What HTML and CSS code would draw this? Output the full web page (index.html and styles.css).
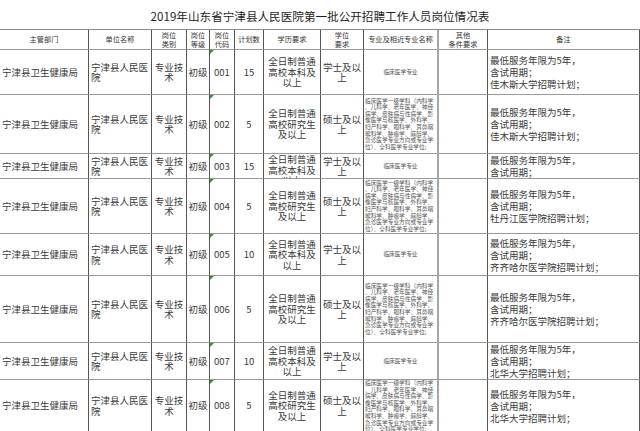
FILE: index.html
```html
<!DOCTYPE html>
<html lang="zh-CN">
<head>
<meta charset="utf-8">
<title>岗位情况表</title>
<link rel="stylesheet" href="styles.css">
</head>
<body>
<div class="title">2019年山东省宁津县人民医院第一批公开招聘工作人员岗位情况表</div>
<div class="sheet">
  <div class="c h">主管部门</div>
  <div class="c h">单位名称</div>
  <div class="c h">岗位
类别</div>
  <div class="c h">岗位
等级</div>
  <div class="c h">岗位
代码</div>
  <div class="c h">计划数</div>
  <div class="c h">学历要求</div>
  <div class="c h">学位
要求</div>
  <div class="c h wide">专业及相近专业名称</div>
  <div class="c h">其他
条件要求</div>
  <div class="c h">备注</div>

  <div class="c l">宁津县卫生健康局</div>
  <div class="c l">宁津县人民医院</div>
  <div class="c">专业技术</div>
  <div class="c">初级</div>
  <div class="c code">001</div>
  <div class="c">15</div>
  <div class="c">全日制普通高校本科及以上</div>
  <div class="c">学士及以上</div>
  <div class="c tiny wide">临床医学专业</div>
  <div class="c"></div>
  <div class="c note">最低服务年限为5年，
含试用期；
佳木斯大学招聘计划；</div>

  <div class="c l">宁津县卫生健康局</div>
  <div class="c l">宁津县人民医院</div>
  <div class="c">专业技术</div>
  <div class="c">初级</div>
  <div class="c code">002</div>
  <div class="c">5</div>
  <div class="c">全日制普通高校研究生及以上</div>
  <div class="c">硕士及以上</div>
  <div class="c tiny long wide">临床医学一级学科（内科学、儿科学、老年医学、神经病学、皮肤病与性病学、影像医学与核医学、外科学、妇产科学、眼科学、耳鼻咽喉科学、肿瘤学、麻醉学、急诊医学专业方向或专业学位）、全科医学专业学位;</div>
  <div class="c"></div>
  <div class="c note">最低服务年限为5年，
含试用期；
佳木斯大学招聘计划；</div>

  <div class="c l">宁津县卫生健康局</div>
  <div class="c l">宁津县人民医院</div>
  <div class="c">专业技术</div>
  <div class="c">初级</div>
  <div class="c code">003</div>
  <div class="c">15</div>
  <div class="c">全日制普通高校本科及以上</div>
  <div class="c">学士及以上</div>
  <div class="c tiny wide">临床医学专业</div>
  <div class="c"></div>
  <div class="c note">最低服务年限为5年，
含试用期；</div>

  <div class="c l">宁津县卫生健康局</div>
  <div class="c l">宁津县人民医院</div>
  <div class="c">专业技术</div>
  <div class="c">初级</div>
  <div class="c code">004</div>
  <div class="c">5</div>
  <div class="c">全日制普通高校研究生及以上</div>
  <div class="c">硕士及以上</div>
  <div class="c tiny long wide">临床医学一级学科（内科学、儿科学、老年医学、神经病学、皮肤病与性病学、影像医学与核医学、外科学、妇产科学、眼科学、耳鼻咽喉科学、肿瘤学、麻醉学、急诊医学专业方向或专业学位）、全科医学专业学位;</div>
  <div class="c"></div>
  <div class="c note">最低服务年限为5年，
含试用期；
牡丹江医学院招聘计划；</div>

  <div class="c l">宁津县卫生健康局</div>
  <div class="c l">宁津县人民医院</div>
  <div class="c">专业技术</div>
  <div class="c">初级</div>
  <div class="c code">005</div>
  <div class="c">10</div>
  <div class="c">全日制普通高校本科及以上</div>
  <div class="c">学士及以上</div>
  <div class="c tiny wide">临床医学专业</div>
  <div class="c"></div>
  <div class="c note">最低服务年限为5年，
含试用期；
齐齐哈尔医学院招聘计划；</div>

  <div class="c l">宁津县卫生健康局</div>
  <div class="c l">宁津县人民医院</div>
  <div class="c">专业技术</div>
  <div class="c">初级</div>
  <div class="c code">006</div>
  <div class="c">5</div>
  <div class="c">全日制普通高校研究生及以上</div>
  <div class="c">硕士及以上</div>
  <div class="c tiny long wide">临床医学一级学科（内科学、儿科学、老年医学、神经病学、皮肤病与性病学、影像医学与核医学、外科学、妇产科学、眼科学、耳鼻咽喉科学、肿瘤学、麻醉学、急诊医学专业方向或专业学位）、全科医学专业学位;</div>
  <div class="c"></div>
  <div class="c note">最低服务年限为5年，
含试用期；
齐齐哈尔医学院招聘计划；</div>

  <div class="c l">宁津县卫生健康局</div>
  <div class="c l">宁津县人民医院</div>
  <div class="c">专业技术</div>
  <div class="c">初级</div>
  <div class="c code">007</div>
  <div class="c">10</div>
  <div class="c">全日制普通高校本科及以上</div>
  <div class="c">学士及以上</div>
  <div class="c tiny wide">临床医学专业</div>
  <div class="c"></div>
  <div class="c note">最低服务年限为5年，
含试用期；
北华大学招聘计划；</div>

  <div class="c l">宁津县卫生健康局</div>
  <div class="c l">宁津县人民医院</div>
  <div class="c">专业技术</div>
  <div class="c">初级</div>
  <div class="c code">008</div>
  <div class="c">5</div>
  <div class="c">全日制普通高校研究生及以上</div>
  <div class="c">硕士及以上</div>
  <div class="c tiny long wide">临床医学一级学科（内科学、儿科学、老年医学、神经病学、皮肤病与性病学、影像医学与核医学、外科学、妇产科学、眼科学、耳鼻咽喉科学、肿瘤学、麻醉学、急诊医学专业方向或专业学位）、全科医学专业学位;</div>
  <div class="c"></div>
  <div class="c note">最低服务年限为5年，
含试用期；
北华大学招聘计划；</div>
</div>
</body>
</html>
```
FILE: styles.css
```css
html, body {
  margin: 0;
  padding: 0;
  background: #ffffff;
}
body {
  font-family: "Noto Sans CJK SC", "Noto Sans", sans-serif;
  color: #222222;
  overflow: hidden;
}
.title {
  box-sizing: border-box;
  height: 29px;
  padding-top: 4px;
  display: flex;
  align-items: center;
  justify-content: center;
  font-size: 11.6px;
  line-height: 1;
  color: #1e1e1e;
}
.sheet {
  display: grid;
  grid-template-columns: 89px 63px 35px 23px 25px 29px 57px 43px 75px 49px 152px;
  grid-template-rows: 20px 45px 59px 25px 55px 42px 67px 37px 52px;
  border-top: 1px solid #8a8a8a;
}
.c {
  box-sizing: border-box;
  position: relative;
  display: flex;
  align-items: safe center;
  justify-content: center;
  text-align: center;
  overflow: hidden;
  white-space: pre-line;
  border-right: 1px solid #555555;
  border-bottom: 1px solid #9a9a9a;
  font-size: 9.5px;
  line-height: 10.5px;
  color: #3a3a3a;
}
.h {
  font-size: 7.2px;
  line-height: 9px;
  color: #333333;
}
.l {
  justify-content: flex-start;
  text-align: left;
  padding-left: 2px;
}
.wide {
  border-right: 2px solid #a6a6a6;
}
.tiny {
  font-size: 5.7px;
  line-height: 6.6px;
  color: #555555;
}
.long {
  justify-content: flex-start;
  text-align: left;
  padding-left: 1px;
  padding-right: 3px;
  line-break: anywhere;
  word-break: break-all;
}
.note {
  justify-content: flex-start;
  text-align: left;
  padding-left: 2px;
  line-height: 12px;
}
.code::before {
  content: "";
  position: absolute;
  top: 0;
  left: 0;
  width: 0;
  height: 0;
  border-top: 4px solid #2e9a2e;
  border-right: 4px solid transparent;
}
```
